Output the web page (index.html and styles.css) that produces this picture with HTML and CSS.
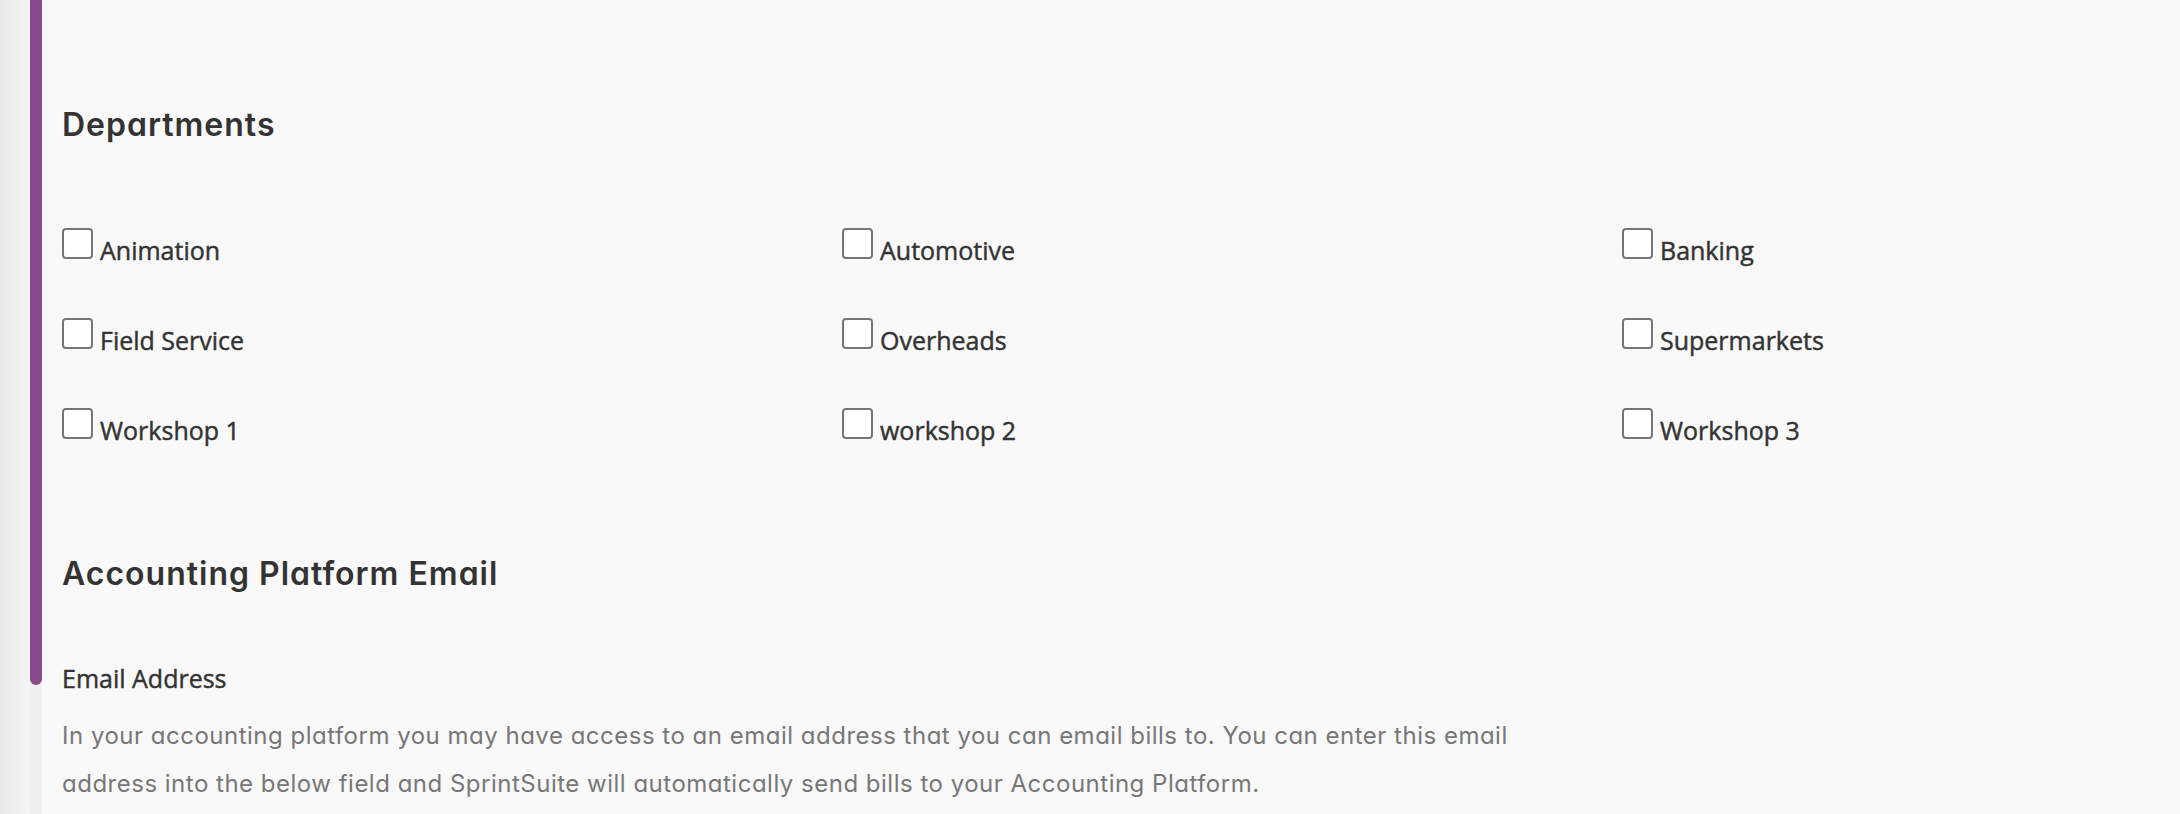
FILE: index.html
```html
<!DOCTYPE html>
<html lang="en">
<head>
<meta charset="utf-8">
<title>Settings</title>
<link rel="stylesheet" href="styles.css">
</head>
<body>
<div class="page">
  <div class="gutter"></div>
  <div class="track"><div class="thumb"></div></div>
  <main class="content">
    <section class="section">
      <h2 class="section-title">Departments</h2>
      <div class="dept-grid">
        <label class="check"><input type="checkbox"><span>Animation</span></label>
        <label class="check"><input type="checkbox"><span>Automotive</span></label>
        <label class="check"><input type="checkbox"><span>Banking</span></label>
        <label class="check"><input type="checkbox"><span>Field Service</span></label>
        <label class="check"><input type="checkbox"><span>Overheads</span></label>
        <label class="check"><input type="checkbox"><span>Supermarkets</span></label>
        <label class="check"><input type="checkbox"><span>Workshop 1</span></label>
        <label class="check"><input type="checkbox"><span>workshop 2</span></label>
        <label class="check"><input type="checkbox"><span>Workshop 3</span></label>
      </div>
    </section>
    <section class="section section-email">
      <h2 class="section-title">Accounting Platform Email</h2>
      <div class="field">
        <label class="field-label">Email Address</label>
        <p class="field-help">In your accounting platform you may have access to an email address that you can email bills to. You can enter this email address into the below field and SprintSuite will automatically send bills to your Accounting Platform.</p>
      </div>
    </section>
  </main>
</div>
</body>
</html>
```

FILE: styles.css
```css
html, body {
  margin: 0;
  padding: 0;
  height: 100%;
  overflow: hidden;
  background: #f9f9f9;
}

.page {
  display: flex;
  min-height: 100%;
}

.gutter {
  width: 30px;
  flex: none;
  background: linear-gradient(to right, #e9e9e9, #f4f4f4);
}

.track {
  width: 12px;
  flex: none;
  background: #efefef;
}

.thumb {
  height: 685px;
  background: #894a8f;
  border-radius: 0 0 6px 6px;
}

.content {
  flex: 1;
  padding-left: 20px;
  padding-top: 105px;
}

.section-title {
  margin: 0;
  font-family: "Inter", "Liberation Sans", sans-serif;
  font-feature-settings: "cv11" 1;
  font-weight: 600;
  font-size: 32px;
  line-height: 40px;
  letter-spacing: 1px;
  color: #333333;
}

.dept-grid {
  margin-top: 83px;
  display: grid;
  grid-template-columns: 780px 780px 1fr;
  row-gap: 53px;
}

.check {
  display: flex;
  align-items: flex-start;
  font-family: "Open Sans", "Noto Sans", sans-serif;
  font-weight: 400;
  font-size: 25px;
  line-height: 30px;
  color: #333333;
  -webkit-text-stroke: 0.45px #333333;
}

.check input {
  appearance: none;
  -webkit-appearance: none;
  margin: 0 7px 0 0;
  width: 31px;
  height: 31px;
  box-sizing: border-box;
  border: 2px solid #767676;
  border-radius: 4px;
  background: #ffffff;
  flex: none;
}

.check span {
  margin-top: 7px;
}

.section-email {
  margin-top: 109px;
}

.field {
  margin-top: 69px;
}

.field-label {
  display: block;
  font-family: "Open Sans", "Noto Sans", sans-serif;
  font-weight: 400;
  font-size: 25px;
  line-height: 30px;
  color: #333333;
  -webkit-text-stroke: 0.45px #333333;
}

.field-help {
  margin: 19px 0 0;
  max-width: 1500px;
  font-family: "Inter", "Liberation Sans", sans-serif;
  font-feature-settings: "cv11" 1;
  font-size: 24px;
  line-height: 48px;
  letter-spacing: 0.5px;
  color: #777777;
}
```
